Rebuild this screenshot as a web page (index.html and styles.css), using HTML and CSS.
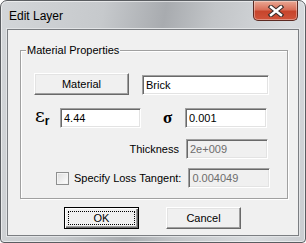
FILE: index.html
```html
<!DOCTYPE html>
<html>
<head>
  <title>Edit Layer</title>
  <link rel="stylesheet" href="styles.css">
</head>
<body>

  <div class="window">
    <div class="titlebar">
      <span class="title">Edit Layer</span>
      <button class="close">
        <svg width="18" height="12" viewBox="0 0 18 12">
          <path d="M4 2 L14 10 M14 2 L4 10" stroke="#3a2c2a" stroke-width="4.6" stroke-linecap="square"/>
          <path d="M4 2 L14 10 M14 2 L4 10" stroke="#fff" stroke-width="2.4" stroke-linecap="square"/>
        </svg>
      </button>
    </div>

    <div class="client">
      <div class="group">
        <div class="group-title">Material Properties</div>

        <div class="row row-material">
          <button class="btn btn-material">Material</button>
          <input type="text" class="field field-name" value="Brick">
        </div>

        <div class="row">
          <span class="sym-eps">&epsilon;<sub>r</sub></span>
          <input type="text" class="field field-eps" value="4.44">
          <span class="sym-sigma">&sigma;</span>
          <input type="text" class="field field-short" value="0.001">
        </div>

        <div class="row row-right">
          <span class="lbl">Thickness</span>
          <input type="text" class="field field-short" value="2e+009" disabled>
        </div>

        <div class="row row-loss">
          <span class="check"></span>
          <span class="lbl">Specify Loss Tangent:</span>
          <input type="text" class="field field-short field-end" value="0.004049" disabled>
        </div>
      </div>

      <div class="actions">
        <button class="btn btn-default"><span class="focus">OK</span></button>
        <button class="btn">Cancel</button>
      </div>
    </div>
  </div>

</body>
</html>
```

FILE: styles.css
```css
body {
  margin: 0;
  background: #fff;
  font-family: 'Liberation Sans', Arial, sans-serif;
}

.window {
  width: 306px;
  height: 243px;
  box-sizing: border-box;
  border: 1px solid #5a5d61;
  border-radius: 7px 7px 4px 4px;
  padding: 0 6px 6px 6px;
  background: linear-gradient(100deg, #d3d6d9 0%, #c6c9cc 30%, #a8abaf 48%, #c2c5c8 62%, #d8dbde 85%, #c9ccd0 100%);
  box-shadow: inset 0 0 0 1px rgba(255,255,255,0.55);
}

.titlebar {
  height: 28px;
  display: flex;
  justify-content: space-between;
  align-items: flex-start;
  margin: 0 -6px;
  padding: 0 8px 0 8px;
}

.title {
  margin-top: 7px;
  line-height: 16px;
  font-size: 12px;
  color: #000;
}

.close {
  width: 45px;
  height: 20px;
  margin-right: -1px;
  padding: 0;
  border: 1px solid #5c2a22;
  border-top: none;
  border-radius: 0 0 5px 5px;
  background: linear-gradient(#e9a894 0%, #d9705a 45%, #c7452c 55%, #d0533a 100%);
  box-shadow: inset 0 0 0 1px rgba(255,255,255,0.35);
  display: flex;
  align-items: center;
  justify-content: center;
}

.client {
  height: 207px;
  box-sizing: border-box;
  background: #f0f0f0;
  border: 1px solid #7b7e82;
  box-shadow: 0 0 0 1px #e2e4e6;
  padding-top: 20px;
}

.group {
  margin: 0 10px 0 12px;
  border: 1px solid #a0a0a0;
  box-shadow: inset 1px 1px 0 #fff, 1px 1px 0 #fff;
  padding-bottom: 10px;
  font-size: 11px;
}

.group-title {
  display: inline-block;
  margin: -8px 0 0 5px;
  padding: 0 1px;
  line-height: 14px;
  background: #f0f0f0;
  color: #000;
  vertical-align: top;
}

.row {
  display: flex;
  align-items: center;
  height: 20px;
  margin-top: 13px;
  padding-left: 14px;
  white-space: nowrap;
}

.row-material {
  height: 22px;
  margin-top: 10px;
  padding-left: 13px;
  align-items: flex-end;
}

.row-right {
  justify-content: flex-end;
  padding-right: 19px;
  margin-top: 11px;
}

.row-loss {
  margin-top: 9px;
  padding-left: 35px;
  padding-right: 19px;
}

.btn {
  font-family: 'Liberation Sans', Arial, sans-serif;
  font-size: 11px;
  color: #000;
  width: 75px;
  height: 22px;
  padding: 0;
  background: #f0f0f0;
  border: 1px solid;
  border-color: #fff #696969 #696969 #fff;
  box-shadow: inset -1px -1px 0 #a0a0a0, inset 1px 1px 0 #e3e3e3;
}

.btn-material {
  width: 95px;
}

.btn-default {
  border: 1px solid #000;
  box-shadow: inset 1px 1px 0 #fff, inset -1px -1px 0 #696969, inset -2px -2px 0 #a0a0a0;
  padding: 3px;
}

.focus {
  display: block;
  height: 100%;
  box-sizing: border-box;
  border: 1px dotted #000;
  line-height: 12px;
}

.field {
  box-sizing: border-box;
  height: 20px;
  padding: 0 3px;
  font-family: 'Liberation Sans', Arial, sans-serif;
  font-size: 11px;
  color: #000;
  background: #fff;
  border: 1px solid;
  border-color: #a0a0a0 #fff #fff #a0a0a0;
  box-shadow: inset 1px 1px 0 #696969, inset -1px -1px 0 #e3e3e3;
  outline: none;
  flex-shrink: 0;
}

.field:disabled {
  background: #f0f0f0;
  color: #6d6d6d;
  -webkit-text-fill-color: #6d6d6d;
  opacity: 1;
}

.field-name {
  width: 127px;
  margin-left: 13px;
}

.field-eps {
  width: 81px;
}

.field-short {
  width: 82px;
}

.field-end {
  margin-left: auto;
}

.sym-eps {
  width: 25px;
  font-family: 'DejaVu Serif', serif;
  font-size: 19px;
  line-height: 20px;
  color: #000;
}

.sym-eps sub {
  font-family: 'Liberation Sans', Arial, sans-serif;
  font-weight: bold;
  font-size: 12px;
  vertical-align: -3px;
}

.sym-sigma {
  width: 22px;
  margin-left: 22px;
  font-family: 'Liberation Serif', serif;
  font-weight: bold;
  font-size: 17px;
  color: #000;
}

.lbl {
  color: #000;
  margin-right: 7px;
}

.check {
  width: 13px;
  height: 13px;
  flex-shrink: 0;
  box-sizing: border-box;
  border: 1px solid #8e8f8f;
  background: linear-gradient(135deg, #dcdcdc, #fff);
  box-shadow: inset 0 0 0 1px #f4f4f4;
  margin-right: 5px;
}

.actions {
  display: flex;
  gap: 27px;
  margin-top: 8px;
  padding-left: 56px;
}
```
